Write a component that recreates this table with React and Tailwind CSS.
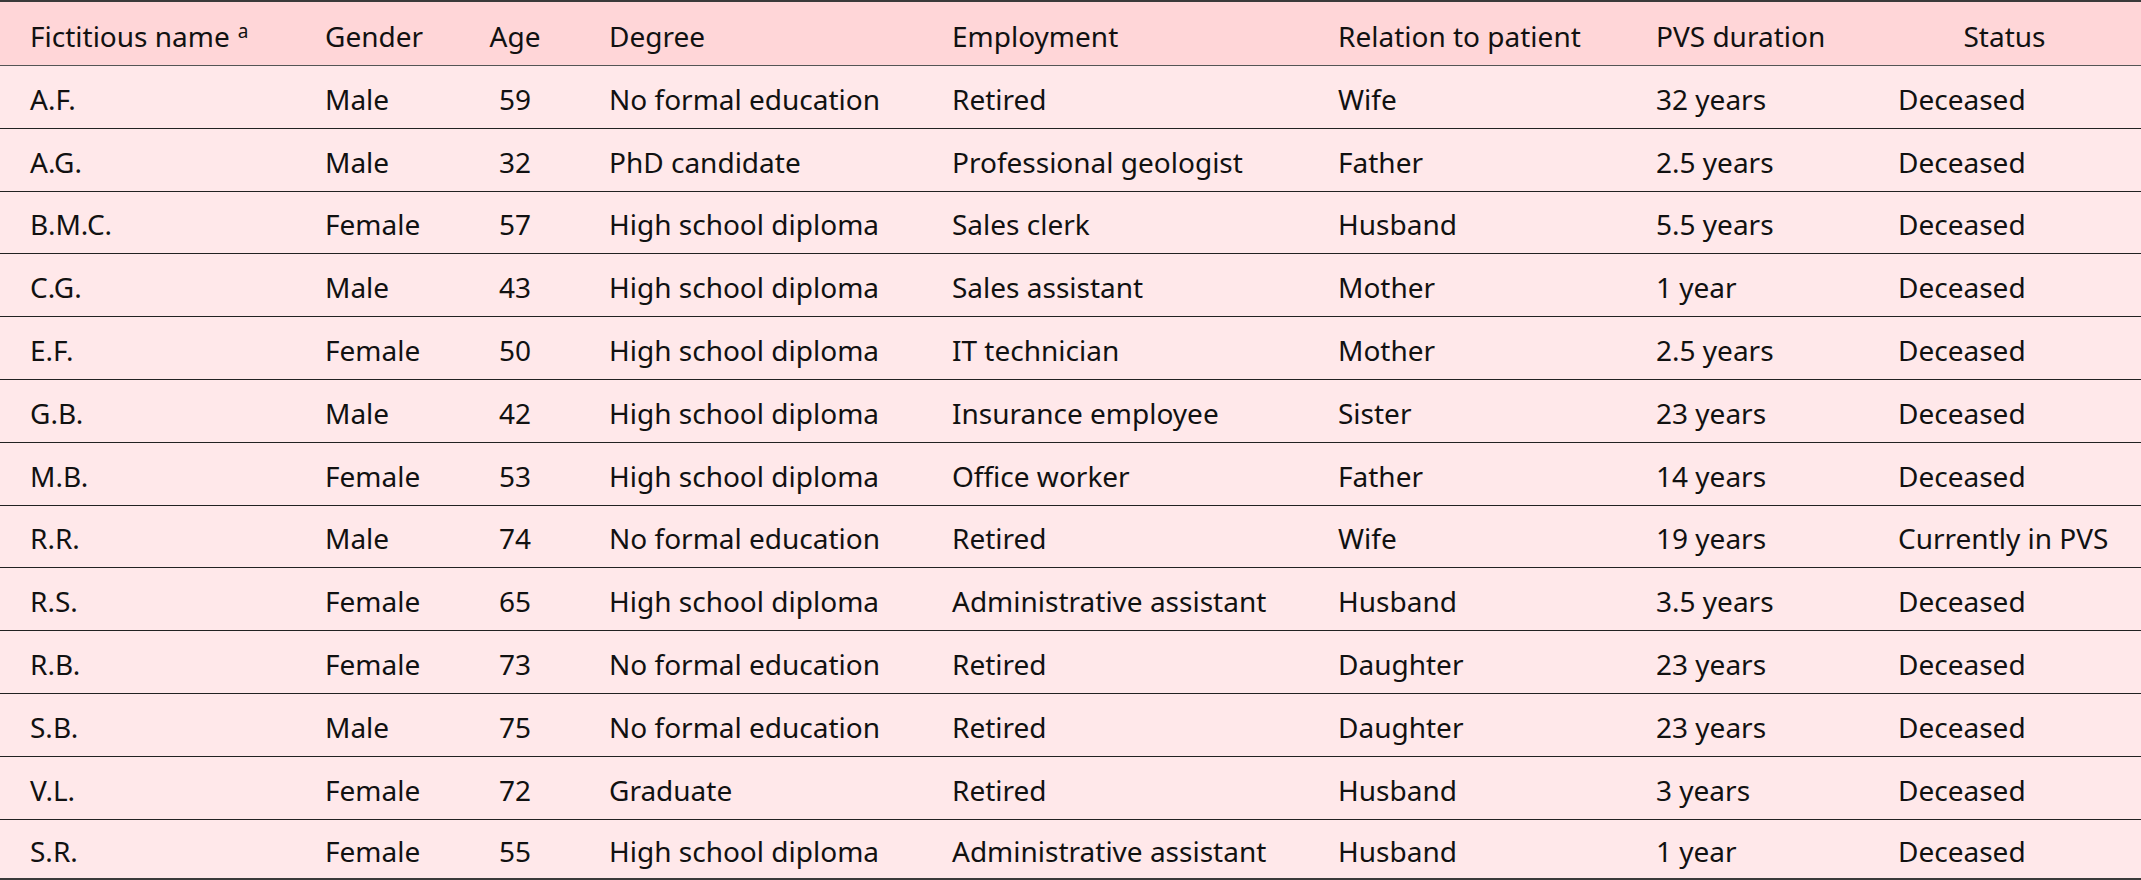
const rows = [
  ["A.F.", "Male", "59", "No formal education", "Retired", "Wife", "32 years", "Deceased"],
  ["A.G.", "Male", "32", "PhD candidate", "Professional geologist", "Father", "2.5 years", "Deceased"],
  ["B.M.C.", "Female", "57", "High school diploma", "Sales clerk", "Husband", "5.5 years", "Deceased"],
  ["C.G.", "Male", "43", "High school diploma", "Sales assistant", "Mother", "1 year", "Deceased"],
  ["E.F.", "Female", "50", "High school diploma", "IT technician", "Mother", "2.5 years", "Deceased"],
  ["G.B.", "Male", "42", "High school diploma", "Insurance employee", "Sister", "23 years", "Deceased"],
  ["M.B.", "Female", "53", "High school diploma", "Office worker", "Father", "14 years", "Deceased"],
  ["R.R.", "Male", "74", "No formal education", "Retired", "Wife", "19 years", "Currently in PVS"],
  ["R.S.", "Female", "65", "High school diploma", "Administrative assistant", "Husband", "3.5 years", "Deceased"],
  ["R.B.", "Female", "73", "No formal education", "Retired", "Daughter", "23 years", "Deceased"],
  ["S.B.", "Male", "75", "No formal education", "Retired", "Daughter", "23 years", "Deceased"],
  ["V.L.", "Female", "72", "Graduate", "Retired", "Husband", "3 years", "Deceased"],
  ["S.R.", "Female", "55", "High school diploma", "Administrative assistant", "Husband", "1 year", "Deceased"],
]

// column widths follow the text starts in the source table
const grid = "grid grid-cols-[310px_126px_158px_343px_386px_318px_242px_258px]"

function Cell({ children, className = "" }) {
  return <div className={`flex items-center px-[15px] pt-[4px] whitespace-nowrap ${className}`}>{children}</div>
}

export default function App() {
  return (
    <div
      className="w-[2141px] h-[880px] overflow-hidden bg-white text-[28px] leading-none text-[#111]"
      style={{ fontFamily: '"Noto Sans", "Liberation Sans", sans-serif' }}
    >
      <div className="border-t-2 border-b-2 border-[#3a3a3a]">
        {/* Header */}
        <div className={`${grid} h-[64px] bg-[#ffd6d8] border-b border-[#555]`}>
          <Cell className="pl-[30px]">
            Fictitious name<sup className="ml-[8px] text-[19px] relative -top-[5px]">a</sup>
          </Cell>
          <Cell>Gender</Cell>
          <Cell className="justify-center">Age</Cell>
          <Cell>Degree</Cell>
          <Cell>Employment</Cell>
          <Cell>Relation to patient</Cell>
          <Cell>PVS duration</Cell>
          <Cell className="justify-center pr-[30px]">Status</Cell>
        </div>

        {/* Body */}
        {rows.map((r, i) => (
          <div
            key={r[0] + i}
            className={`${grid} bg-[#ffe8ea] ${
              i < rows.length - 1 ? "h-[62.8px] border-b border-[#222]" : "h-[58px]"
            }`}
          >
            <Cell className="pl-[30px]">{r[0]}</Cell>
            <Cell>{r[1]}</Cell>
            <Cell className="justify-center">{r[2]}</Cell>
            <Cell>{r[3]}</Cell>
            <Cell>{r[4]}</Cell>
            <Cell>{r[5]}</Cell>
            <Cell>{r[6]}</Cell>
            <Cell>{r[7]}</Cell>
          </div>
        ))}
      </div>
    </div>
  )
}
